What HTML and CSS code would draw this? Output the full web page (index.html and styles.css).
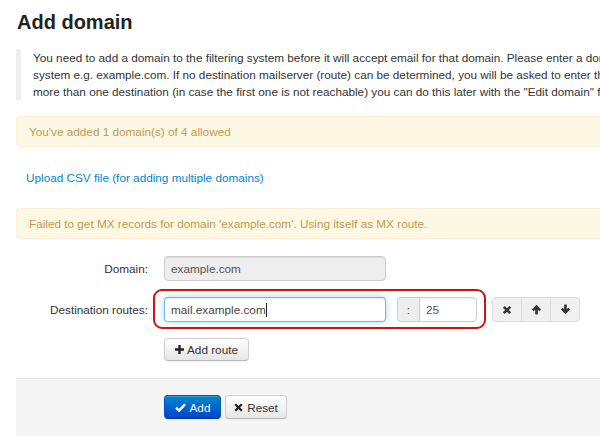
FILE: index.html
```html
<!DOCTYPE html>
<html>
<head>
<meta charset="utf-8">
<link rel="stylesheet" href="styles.css">
</head>
<body>
<div class="page">
  <h1 class="title">Add domain</h1>
  <blockquote class="intro">
    You need to add a domain to the filtering system before it will accept email for that domain. Please enter a domain name for the filtering<br>
    system e.g. example.com. If no destination mailserver (route) can be determined, you will be asked to enter the destination manually. If you have<br>
    more than one destination (in case the first one is not reachable) you can do this later with the "Edit domain" feature.
  </blockquote>
  <div class="alert">You've added 1 domain(s) of 4 allowed</div>
  <p class="upload"><a href="#">Upload CSV file (for adding multiple domains)</a></p>
  <div class="alert">Failed to get MX records for domain 'example.com'. Using itself as MX route.</div>

  <form class="form">
    <div class="row">
      <label class="label">Domain:</label>
      <div class="controls">
        <input class="input input-disabled" type="text" value="example.com" disabled>
      </div>
    </div>
    <div class="row">
      <label class="label">Destination routes:</label>
      <div class="controls routes">
        <div class="input input-focus">mail.example.com<span class="caret"></span></div>
        <div class="prepend">
          <span class="addon">:</span>
          <span class="input port">25</span>
        </div>
        <div class="highlight"></div>
        <div class="btn-group">
          <span class="btn btn-icon"><svg width="10" height="10" viewBox="0 0 10 10"><path d="M1.8 1.8 L8.2 8.2 M8.2 1.8 L1.8 8.2" stroke="#333" stroke-width="2.6" stroke-linecap="butt"/></svg></span>
          <span class="btn btn-icon"><svg width="11" height="11" viewBox="0 0 10 11"><path d="M5 0.8 L9.6 5.4 L7.8 7.2 L6.3 5.7 L6.3 10.5 L3.7 10.5 L3.7 5.7 L2.2 7.2 L0.4 5.4 Z" fill="#333"/></svg></span>
          <span class="btn btn-icon"><svg width="11" height="11" viewBox="0 0 10 11"><path d="M5 10.2 L9.6 5.6 L7.8 3.8 L6.3 5.3 L6.3 0.5 L3.7 0.5 L3.7 5.3 L2.2 3.8 L0.4 5.6 Z" fill="#333"/></svg></span>
        </div>
      </div>
    </div>
    <div class="row">
      <span class="label"></span>
      <div class="controls">
        <span class="btn btn-add-route"><svg width="9" height="9" viewBox="0 0 9 9"><path d="M3.3 0 H5.7 V3.3 H9 V5.7 H5.7 V9 H3.3 V5.7 H0 V3.3 H3.3 Z" fill="#222"/></svg>Add route</span>
      </div>
    </div>
    <div class="actions">
      <span class="btn btn-primary"><svg width="11" height="9" viewBox="0 0 11 9"><path d="M1 4.6 L4 7.6 L10 1.4" stroke="#fff" stroke-width="2.4" fill="none"/></svg>Add</span>
      <span class="btn btn-reset"><svg width="9" height="9" viewBox="0 0 9 9"><path d="M1.2 1.2 L7.8 7.8 M7.8 1.2 L1.2 7.8" stroke="#222" stroke-width="2.3"/></svg>Reset</span>
    </div>
  </form>
</div>
</body>
</html>
```

FILE: styles.css
```css
html, body {
  margin: 0;
  padding: 0;
  background: #fff;
  overflow: hidden;
}
body {
  font-family: "Liberation Sans", Arial, sans-serif;
  font-size: 11.75px;
  color: #333;
  width: 600px;
  height: 436px;
}
.page {
  width: 1000px;
  padding-left: 16px;
}
.title {
  margin: 10px 0 15px 1px;
  font-size: 20px;
  line-height: 24px;
  font-weight: bold;
  color: #222;
}
.intro {
  margin: 0 0 16px 0;
  padding: 0 0 0 12px;
  border-left: 5px solid #eee;
  line-height: 17px;
  white-space: nowrap;
  color: #333;
}
.alert {
  background: #fcf8e3;
  border: 1px solid #fbeed5;
  border-radius: 4px;
  color: #c09853;
  padding: 7px 12px;
  line-height: 15px;
}
.upload {
  margin: 21px 0 20px 10px;
  line-height: 20px;
}
.upload a {
  color: #0088cc;
  text-decoration: none;
}
.form {
  margin: 17px 0 0 0;
}
.row {
  display: flex;
  align-items: center;
  margin-bottom: 16px;
}
.row:nth-child(3) {
  margin-bottom: 17px;
}
.label {
  width: 132px;
  margin-right: 16px;
  text-align: right;
  color: #333;
}
.controls {
  display: flex;
  align-items: center;
}
.routes {
  position: relative;
}
.input {
  box-sizing: border-box;
  height: 25px;
  width: 222px;
  padding: 4px 6px;
  line-height: 15px;
  font-family: "Liberation Sans", Arial, sans-serif;
  font-size: 11.75px;
  color: #555;
  border: 1px solid #ccc;
  border-radius: 4px;
  background: #fff;
  box-shadow: inset 0 1px 1px rgba(0,0,0,0.075);
  margin: 0;
}
.input-disabled {
  background: #eee;
  color: #555;
}
.input-focus {
  border-color: rgba(82,168,236,0.8);
  box-shadow: inset 0 1px 1px rgba(0,0,0,0.075), 0 0 6px rgba(82,168,236,0.5);
  color: #444;
}
.caret {
  display: inline-block;
  width: 1px;
  height: 14px;
  background: #222;
  vertical-align: -3px;
}
.prepend {
  display: flex;
  margin-left: 11px;
}
.addon {
  box-sizing: border-box;
  width: 22px;
  height: 25px;
  line-height: 23px;
  text-align: center;
  background: #eee;
  border: 1px solid #ccc;
  border-right: none;
  border-radius: 4px 0 0 4px;
  color: #555;
}
.port {
  width: 58px;
  border-radius: 0 4px 4px 0;
}
.highlight {
  position: absolute;
  left: -11px;
  top: -8px;
  width: 333px;
  height: 40px;
  box-sizing: border-box;
  border: 2px solid #cc1414;
  border-radius: 9px;
  pointer-events: none;
}
.btn-group {
  display: flex;
  margin-left: 15px;
}
.btn {
  box-sizing: border-box;
  display: inline-flex;
  align-items: center;
  justify-content: center;
  height: 25px;
  font-size: 11.75px;
  color: #333;
  background: linear-gradient(#ffffff, #e6e6e6);
  border: 1px solid #cfcfcf;
  border-bottom-color: #b8b8b8;
  border-radius: 4px;
  box-shadow: inset 0 1px 0 rgba(255,255,255,0.2), 0 1px 2px rgba(0,0,0,0.05);
}
.btn-icon {
  width: 30px;
  background: #f0f0f0;
  border-color: #dcdcdc;
  border-radius: 0;
  box-shadow: none;
}
.btn-icon + .btn-icon {
  margin-left: -1px;
}
.btn-icon:first-child {
  border-radius: 4px 0 0 4px;
}
.btn-icon:last-child {
  border-radius: 0 4px 4px 0;
}
.btn-add-route {
  width: 85px;
  height: 23px;
}
.btn-add-route svg {
  margin-right: 3px;
}
.actions {
  background: #f5f5f5;
  border-top: 1px solid #e5e5e5;
  padding: 16px 0 20px 148px;
  display: flex;
}
.btn-primary {
  width: 57px;
  height: 24px;
  color: #fff;
  background: linear-gradient(#0088cc, #0044cc);
  border-color: #0055bb #0055bb #003a99;
}
.btn-primary svg {
  margin-right: 4px;
}
.btn-reset {
  width: 62px;
  height: 24px;
  margin-left: 4px;
}
.btn-reset svg {
  margin-right: 4px;
}
```
